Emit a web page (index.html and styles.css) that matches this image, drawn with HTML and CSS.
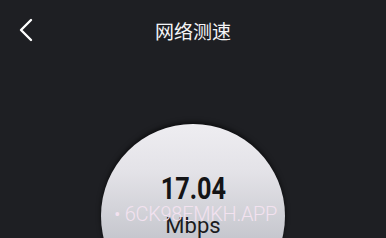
FILE: index.html
```html
<!DOCTYPE html>
<html lang="zh">
<head>
<meta charset="utf-8">
<title>网络测速</title>
<link rel="stylesheet" href="styles.css">
</head>
<body>
<div class="screen">
  <header class="topbar">
    <button class="back" aria-label="返回">
      <svg width="16" height="24" viewBox="0 0 16 24"><path d="M13 2 L3 12 L13 22" fill="none" stroke="#fff" stroke-width="2.4" stroke-linecap="round" stroke-linejoin="round"/></svg>
    </button>
    <h1 class="title">网络测速</h1>
    <span class="spacer"></span>
  </header>
  <main class="stage">
    <div class="dial">
      <div class="speed">17.04</div>
      <div class="unit">Mbps</div>
    </div>
  </main>
  <div class="watermark">• 6CK98EMKH.APP</div>
</div>
</body>
</html>
```
FILE: styles.css
```css
* { box-sizing: border-box; }
html, body {
  margin: 0;
  padding: 0;
  width: 386px;
  height: 238px;
  overflow: hidden;
  background: #1e1f23;
}
.screen {
  position: relative;
  width: 386px;
  height: 238px;
  overflow: hidden;
  font-family: Roboto, "Noto Sans CJK SC", sans-serif;
}
.topbar {
  height: 62px;
  display: grid;
  grid-template-columns: 60px 1fr 60px;
  align-items: center;
}
.back {
  background: none;
  border: 0;
  padding: 0 0 0 18px;
  margin: 0;
  display: flex;
  align-items: center;
  height: 24px;
  margin-top: -2px;
}
.title {
  margin: 0;
  text-align: center;
  color: #f4f4f6;
  font-family: "Noto Sans CJK SC", sans-serif;
  font-weight: 400;
  font-size: 19px;
  line-height: 24px;
  margin-top: -1px;
}
.stage {
  display: flex;
  justify-content: center;
  padding-top: 62px;
}
.dial {
  width: 184px;
  height: 184px;
  border-radius: 50%;
  flex: none;
  background: linear-gradient(180deg, #eeedf1 0%, #e4e3e8 25%, #d4d4da 45%, #c6c7ce 62%, #b8bac2 100%);
  box-shadow: 0 -2px 5px rgba(0,0,0,0.6);
  display: flex;
  flex-direction: column;
  align-items: center;
  padding-top: 48px;
}
.speed {
  font-family: Roboto, "DejaVu Sans Condensed", sans-serif;
  font-weight: 700;
  font-size: 32px;
  line-height: 32px;
  color: #141416;
  transform: scaleX(0.79);
}
.unit {
  font-family: Roboto, sans-serif;
  font-size: 22px;
  line-height: 26px;
  color: #1b1b1d;
  margin-top: 9px;
}
.watermark {
  position: absolute;
  left: 114px;
  top: 202px;
  font-family: Roboto, sans-serif;
  font-weight: 300;
  font-size: 20px;
  line-height: 24px;
  color: #f3e2f0;
  letter-spacing: -0.3px;
  white-space: nowrap;
}
```
